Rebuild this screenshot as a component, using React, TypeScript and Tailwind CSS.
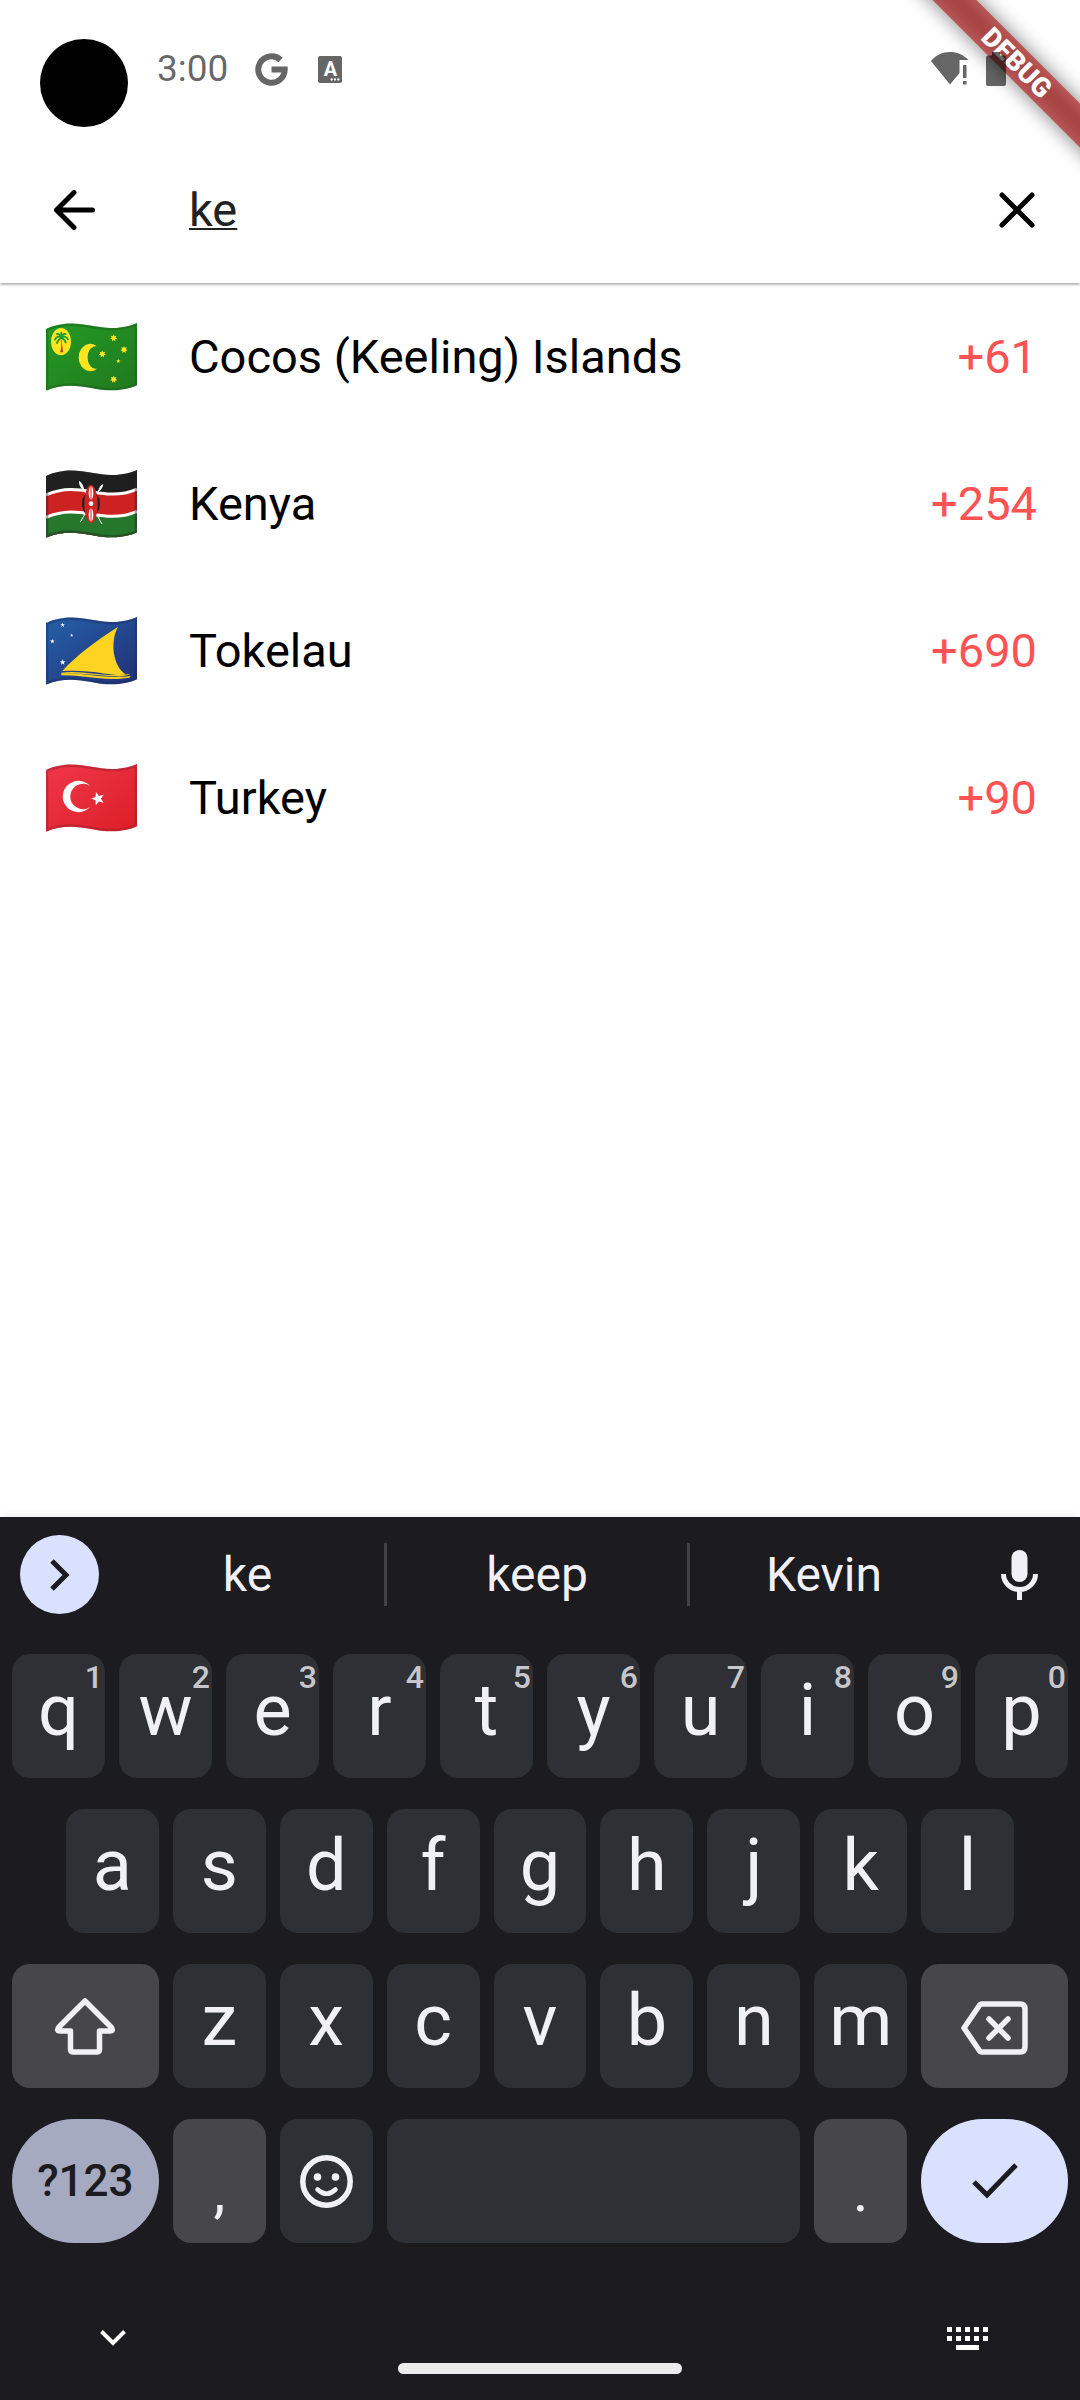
import React, { useId } from "react";

const WAVE_TOP = "M0 18 C80 -18 140 17 200 15 C230 15 255 8 273 0";
const FLAG_SHAPE =
  "M0 18 C80 -18 140 17 200 15 C230 15 255 8 273 0 V187 C255 195 230 202 200 202 C140 204 80 169 0 203 Z";

function Star({ x, y, r, n = 5, inner = 0.42, turn = 0, fill }: {
  x: number; y: number; r: number; n?: number; inner?: number; turn?: number; fill: string;
}) {
  const pts: string[] = [];
  for (let i = 0; i < n * 2; i++) {
    const a = (Math.PI * i) / n - Math.PI / 2 + turn;
    const d = i % 2 ? r * inner : r;
    pts.push(`${(x + d * Math.cos(a)).toFixed(1)},${(y + d * Math.sin(a)).toFixed(1)}`);
  }
  return <polygon points={pts.join(" ")} fill={fill} />;
}

function Flag({ label, from, to, edge, children }: {
  label: string; from: string; to: string; edge: string; children: React.ReactNode;
}) {
  const id = useId();
  return (
    <svg role="img" aria-label={label} viewBox="0 0 273 204" className="h-[68px] w-[91px] shrink-0">
      <defs>
        <clipPath id={`${id}c`}>
          <path d={FLAG_SHAPE} />
        </clipPath>
        <linearGradient id={`${id}g`} x1="0" y1="0" x2="1" y2="1">
          <stop offset="0" stopColor={from} />
          <stop offset="1" stopColor={to} />
        </linearGradient>
      </defs>
      <g clipPath={`url(#${id}c)`}>
        <rect width="273" height="204" fill={`url(#${id}g)`} />
        {children}
        <path d={FLAG_SHAPE} fill="none" stroke={edge} strokeOpacity="0.4" strokeWidth="14" />
      </g>
    </svg>
  );
}

function CocosFlag() {
  return (
    <Flag label="Flag of Cocos (Keeling) Islands" from="#239b24" to="#21781f" edge="#1d5a1d">
      <ellipse cx="45" cy="56" rx="30" ry="41" fill="#ffe51f" />
      <path d="M46 50 C49 65 49 76 52 88 H42 C46 76 47 65 44 50Z" fill="#b5452c" />
      <g fill="none" stroke="#1f9a34" strokeWidth="5.500" strokeLinecap="round">
        <path d="M46 44 C38 38 30 42 27 50" />
        <path d="M46 44 C54 37 62 42 66 49" />
        <path d="M46 44 C40 48 34 54 33 60" />
        <path d="M46 44 C53 48 58 54 59 59" />
        <path d="M46 44 C42 36 37 32 33 33" />
        <path d="M46 44 C48 35 53 31 59 33" />
        <path d="M46 44 V29" />
      </g>
      <path d="M153 70 A35 41 0 1 0 153 137 A24 34 0 1 1 153 70Z" fill="#ffe51f" />
      <Star x={203} y={45} r={11} n={7} inner={0.55} fill="#ffe51f" />
      <Star x={234} y={80} r={11} n={7} inner={0.55} fill="#ffe51f" />
      <Star x={169} y={93} r={11} n={7} inner={0.55} fill="#ffe51f" />
      <Star x={217} y={114} r={7} fill="#ffe51f" />
      <Star x={203} y={169} r={11} n={7} inner={0.55} fill="#ffe51f" />
    </Flag>
  );
}

function KenyaFlag() {
  return (
    <Flag label="Flag of Kenya" from="#212121" to="#1b1b1b" edge="#222222">
      <path d={`${WAVE_TOP} V204 H0 Z`} transform="translate(0 57)" fill="#cc2222" />
      <path d={`${WAVE_TOP} V204 H0 Z`} transform="translate(0 124)" fill="#26762b" />
      <path d={WAVE_TOP} transform="translate(0 57)" fill="none" stroke="#ffffff" strokeWidth="9" />
      <path d={WAVE_TOP} transform="translate(0 124)" fill="none" stroke="#ffffff" strokeWidth="9" />
      <g stroke="#ffffff" strokeWidth="3" strokeLinecap="round">
        <path d="M168 46 L104 154" />
        <path d="M102 38 L167 161" />
      </g>
      <path d="M172 42 C164 46 157 55 156 66 C164 62 171 52 172 42Z" fill="#ffffff" />
      <path d="M99 32 C98 44 105 56 114 61 C114 49 108 38 99 32Z" fill="#ffffff" />
      <ellipse cx="135" cy="101" rx="27" ry="38" fill="#212121" />
      <ellipse cx="135" cy="102" rx="20" ry="57" fill="#cc2222" />
      <ellipse cx="135" cy="69" rx="7" ry="20" fill="#ffffff" />
      <ellipse cx="135" cy="135" rx="7" ry="20" fill="#ffffff" />
      <circle cx="135" cy="101" r="7" fill="#ffffff" />
      <path d="M135 49 V90 M135 114 V156" stroke="#cc2222" strokeWidth="3" />
    </Flag>
  );
}

function TokelauFlag() {
  return (
    <Flag label="Flag of Tokelau" from="#2461a8" to="#222f75" edge="#1b2a60">
      <path d="M49 162 C90 116 150 72 216 29 C192 72 200 148 240 172 C190 180 150 156 49 162Z" fill="#ffd321" />
      <path d="M46 167 C120 158 165 184 254 170 C220 190 150 166 46 170Z" fill="#ffd321" />
      <path d="M46 169 C120 166 165 187 254 177 L250 182 C170 194 120 174 46 175Z" fill="#ffd321" />
      <Star x={50} y={24} r={7} fill="#ffffff" />
      <Star x={77} y={55} r={5} fill="#ffffff" />
      <Star x={19} y={73} r={7} fill="#ffffff" />
      <Star x={50} y={136} r={9} fill="#ffffff" />
    </Flag>
  );
}

function TurkeyFlag() {
  return (
    <Flag label="Flag of Turkey" from="#f0364a" to="#dc1f26" edge="#8a1f28">
      <path d="M132 66 A47 47 0 1 0 132 129 A38 38 0 1 1 132 66Z" fill="#ffffff" />
      <Star x={156} y={104} r={21} turn={-0.3} fill="#ffffff" />
    </Flag>
  );
}

const COUNTRIES = [
  { name: "Cocos (Keeling) Islands", code: "+61", Icon: CocosFlag },
  { name: "Kenya", code: "+254", Icon: KenyaFlag },
  { name: "Tokelau", code: "+690", Icon: TokelauFlag },
  { name: "Turkey", code: "+90", Icon: TurkeyFlag },
];

function StatusBar() {
  return (
    <div className="flex h-[136px] items-start pl-10 pr-[74px] pt-[39px] text-black/60">
      <div className="size-[88px] rounded-full bg-black" />
      <div className="relative z-10 ml-[29px] flex h-[60px] flex-1 items-center">
        <span className="text-[37px] leading-[44px]">3:00</span>
        <svg viewBox="0 0 33 33" className="ml-[27px] size-[33px]" fill="none" stroke="currentColor" strokeWidth="6">
          <path d="M25.6 7 A13.2 13.2 0 1 0 29.7 16.5 H16.5" />
        </svg>
        <span className="relative ml-[30px] flex h-[27px] w-6 justify-center rounded-[2px] bg-[#666666] text-[20px] font-bold leading-[26px] text-white">
          A
          <svg viewBox="0 0 12 3" className="absolute bottom-0.5 right-0.5 h-[3px] w-2.5" fill="#ffffff">
            <circle cx="2" cy="1.5" r="1.4" />
            <circle cx="6" cy="1.5" r="1.4" />
            <circle cx="10" cy="1.5" r="1.4" />
          </svg>
        </span>
        <svg viewBox="0 0 38 34" className="ml-auto h-[34px] w-[38px]" fill="currentColor" aria-label="Wi-Fi, no internet">
          <path d="M19 0 C11.500 0 5 3 0 9 L19 32.500 L28.500 21 V8 H37.500 C32 2.500 26 0 19 0Z" />
          <path d="M32 13 H35.500 V26 H32Z M32 29 H35.500 V32.500 H32Z" />
        </svg>
        <svg viewBox="0 0 20 34" className="ml-[17px] h-[34px] w-5" fill="currentColor" aria-label="Battery full">
          <path d="M6 0 H14 V3.500 H18 Q20 3.500 20 5.500 V32 Q20 34 18 34 H2 Q0 34 0 32 V5.500 Q0 3.500 2 3.500 H6Z" />
        </svg>
      </div>
    </div>
  );
}

function DebugBanner() {
  return (
    <div className="pointer-events-none absolute right-0 top-0 size-[200px] overflow-hidden">
      <div className="absolute -left-[23px] top-[47px] flex h-[31px] w-80 rotate-45 items-center justify-center">
        <div className="absolute inset-0 bg-black/50 blur-[10px]" />
        <div className="absolute inset-0 bg-[#b71c1c]/63" />
        <span className="relative text-[27px] font-black leading-8 text-white">DEBUG</span>
      </div>
    </div>
  );
}

function Key({ label, hint, tone = "plain" }: { label: string; hint?: string; tone?: "plain" | "low" }) {
  return (
    <button
      type="button"
      className={
        tone === "low"
          ? "flex h-[124px] min-w-0 flex-1 items-center justify-center rounded-[18px] bg-[#47464b] pt-5 text-[60px] leading-[72px]"
          : "relative flex h-[124px] min-w-0 flex-1 items-center justify-center rounded-[18px] bg-[#2f3035] pb-2.5 text-[72px] leading-[84px]"
      }
    >
      {label}
      {hint && (
        <span className="absolute right-0.5 top-2 text-[32px] font-medium leading-[30px] text-[#c6c6cb]">{hint}</span>
      )}
    </button>
  );
}

function Keyboard() {
  return (
    <section aria-label="Keyboard" className="bg-[#1b1b20] text-[#f1f0f7] shadow-[0_-1px_8px_rgba(0,0,0,0.08)]">
      <div className="grid h-[115px] grid-cols-[99px_288fr_303fr_268fr_122px] items-center text-[48px] leading-[60px]">
        <button type="button" aria-label="Expand toolbar" className="ml-5 flex size-[79px] items-center justify-center rounded-full bg-[#dae1ff]">
          <svg viewBox="0 0 20 32" className="h-8 w-5" fill="none" stroke="#1b1b20" strokeWidth="5">
            <path d="M2 2 L16 16 L2 30" />
          </svg>
        </button>
        <button type="button" className="h-[63px] border-r-3 border-[#414146] pl-3">ke</button>
        <button type="button" className="h-[63px] border-r-3 border-[#414146]">keep</button>
        <button type="button" className="h-[63px]">Kevin</button>
        <button type="button" aria-label="Voice input" className="flex justify-center">
          <svg viewBox="0 0 37 50" className="h-[50px] w-[37px]">
            <rect x="10.500" y="0" width="16" height="32" rx="8" fill="currentColor" />
            <path d="M2.500 24 A16 15.500 0 0 0 34.500 24 M18.500 39 V50" fill="none" stroke="currentColor" strokeWidth="5" />
          </svg>
        </button>
      </div>

      <div className="mt-[22px] flex flex-col gap-[31px] px-3">
        <div className="flex gap-3.5">
          {"qwertyuiop".split("").map((c, i) => (
            <Key key={c} label={c} hint={String((i + 1) % 10)} />
          ))}
        </div>
        <div className="flex gap-3.5 px-[54px]">
          {"asdfghjkl".split("").map((c) => (
            <Key key={c} label={c} />
          ))}
        </div>
        <div className="grid grid-cols-[147fr_repeat(7,93fr)_147fr] gap-3.5">
          <button type="button" aria-label="Shift" className="flex items-center justify-center rounded-[18px] bg-[#47464b]">
            <svg viewBox="0 0 60 58" className="h-[58px] w-[60px]" fill="none" stroke="currentColor" strokeWidth="5.500" strokeLinejoin="round">
              <path d="M30 4 L56 30 Q59 34 55 34 H44.500 V52 Q44.500 55 41.500 55 H18.500 Q15.500 55 15.500 52 V34 H5 Q1 34 4 30 Z" />
            </svg>
          </button>
          {"zxcvbnm".split("").map((c) => (
            <Key key={c} label={c} />
          ))}
          <button type="button" aria-label="Delete" className="flex items-center justify-center rounded-[18px] bg-[#47464b] pt-1">
            <svg viewBox="0 0 67 54" className="h-[54px] w-[67px]" fill="none" stroke="currentColor" strokeWidth="5.500" strokeLinejoin="round" strokeLinecap="round">
              <path d="M21 3 H59 Q64 3 64 8 V46 Q64 51 59 51 H21 Q19 51 18 49 L3 27 L18 5 Q19 3 21 3Z" />
              <path d="M28 18 L47 37 M47 18 L28 37" />
            </svg>
          </button>
        </div>
        <div className="grid grid-cols-[147fr_93fr_93fr_414fr_93fr_147fr] gap-3.5">
          <button type="button" className="rounded-full bg-[#a5aac1] text-[44px] font-medium leading-[56px] text-[#1b1b20]">?123</button>
          <Key label="," tone="low" />
          <button type="button" aria-label="Emoji" className="flex items-center justify-center rounded-[18px] bg-[#2f3035]">
            <svg viewBox="0 0 53 53" className="size-[53px]" fill="none" stroke="currentColor">
              <circle cx="26.500" cy="26.500" r="23.700" strokeWidth="5.500" />
              <path d="M17.500 34.500 Q26.500 43 35.500 34.500" strokeWidth="4.500" strokeLinecap="round" />
              <circle cx="17.500" cy="22" r="3.800" fill="currentColor" stroke="none" />
              <circle cx="35.500" cy="22" r="3.800" fill="currentColor" stroke="none" />
            </svg>
          </button>
          <button type="button" aria-label="Space" className="rounded-[18px] bg-[#2f3035]" />
          <Key label="." tone="low" />
          <button type="button" aria-label="Done" className="flex items-center justify-center rounded-full bg-[#dae1ff]">
            <svg viewBox="0 0 46 36" className="h-9 w-[46px]" fill="none" stroke="#1b1b20" strokeWidth="5">
              <path d="M2 19 L15 32 L44 2" />
            </svg>
          </button>
        </div>
      </div>

      <div className="pb-[26px] pt-[84px] text-white">
        <div className="flex h-[22px] items-center justify-between pl-[100px] pr-[92px]">
          <button type="button" aria-label="Hide keyboard">
            <svg viewBox="0 0 26 16" className="h-4 w-[26px]" fill="none" stroke="currentColor" strokeWidth="4">
              <path d="M1.500 1.500 L13 13 L24.500 1.500" />
            </svg>
          </button>
          <button type="button" aria-label="Switch keyboard">
            <svg viewBox="0 0 41 23" className="h-[23px] w-[41px]" fill="currentColor">
              {[0, 9, 18, 27, 36].map((x) => (
                <React.Fragment key={x}>
                  <rect x={x} y="0" width="5" height="5" />
                  <rect x={x} y="9" width="5" height="5" />
                </React.Fragment>
              ))}
              <rect x="9" y="18" width="23" height="5" />
            </svg>
          </button>
        </div>
        <div className="mx-auto mt-3.5 h-[11px] w-[284px] rounded-full bg-[#ececec]" />
      </div>
    </section>
  );
}

export default function App() {
  return (
    <div className="relative flex min-h-screen flex-col bg-white font-[Roboto,sans-serif] text-black">
      <DebugBanner />
      <header className="shadow-[0_1px_3px_rgba(0,0,0,0.45)]">
        <StatusBar />
        <div className="flex h-[147px] items-center pl-[54px] pr-[45px]">
          <button type="button" aria-label="Back">
            <svg viewBox="0 0 41 40" className="h-10 w-[41px]" fill="none" stroke="currentColor" strokeWidth="5" strokeLinecap="round" strokeLinejoin="round">
              <path d="M20 2.500 L2.500 20 L20 37.500 M2.500 20 H38.500" />
            </svg>
          </button>
          <input
            type="text"
            aria-label="Search country"
            defaultValue="ke"
            className="ml-[94px] min-w-0 flex-1 bg-transparent text-[47px] leading-[56px] text-[#222222] underline decoration-2 underline-offset-2 outline-none"
          />
          <button type="button" aria-label="Clear">
            <svg viewBox="0 0 36 36" className="size-9" fill="none" stroke="currentColor" strokeWidth="5" strokeLinecap="round">
              <path d="M3 3 L33 33 M33 3 L3 33" />
            </svg>
          </button>
        </div>
      </header>

      <main className="flex-1">
        <ul>
          {COUNTRIES.map(({ name, code, Icon }) => (
            <li key={name}>
              <button type="button" className="flex h-[147px] w-full items-center pl-[46px] pr-[43px] text-[47px] leading-[56px]">
                <Icon />
                <span className="ml-[52px] flex-1 text-left">{name}</span>
                <span className="text-[#ff5252]">{code}</span>
              </button>
            </li>
          ))}
        </ul>
      </main>

      <Keyboard />
    </div>
  );
}
